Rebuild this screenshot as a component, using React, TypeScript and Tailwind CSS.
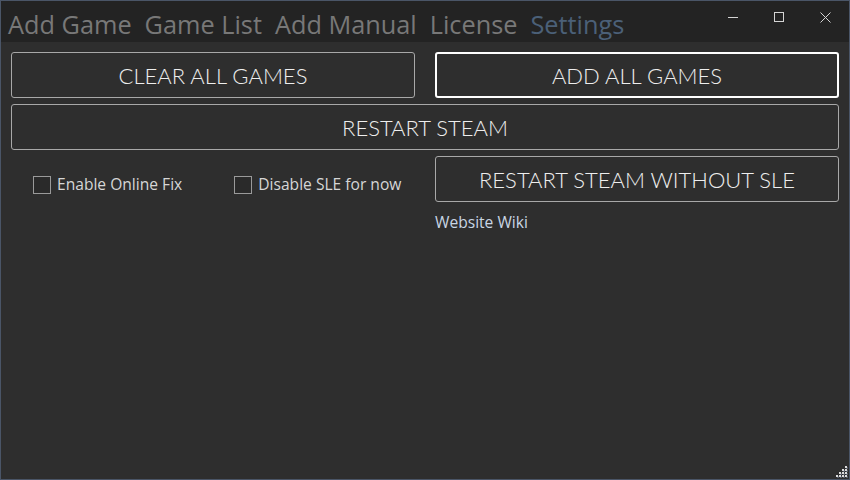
import React from "react";

const tabs = ["Add Game", "Game List", "Add Manual", "License", "Settings"];

function WinButtons() {
  return (
    <div className="flex items-center h-full">
      <div className="w-[46px] h-full flex items-center justify-center">
        <svg width="10" height="10" viewBox="0 0 10 10">
          <line x1="0" y1="5.5" x2="10" y2="5.5" stroke="#d4d4d4" strokeWidth="1" />
        </svg>
      </div>
      <div className="w-[46px] h-full flex items-center justify-center">
        <svg width="10" height="10" viewBox="0 0 10 10">
          <rect x="0.5" y="0.5" width="9" height="9" fill="none" stroke="#d4d4d4" strokeWidth="1" />
        </svg>
      </div>
      <div className="w-[46px] h-full flex items-center justify-center">
        <svg width="11" height="11" viewBox="0 0 11 11">
          <path d="M0.5 0.5 L10.5 10.5 M10.5 0.5 L0.5 10.5" stroke="#d4d4d4" strokeWidth="1" />
        </svg>
      </div>
    </div>
  );
}

function Check({ label }: { label: string }) {
  return (
    <label className="flex items-center gap-[6px] text-[15.6px] text-[#d6d6d6]">
      <span className="w-[18px] h-[18px] border border-[#9a9a9a] bg-[#2a2a2a]" />
      <span>{label}</span>
    </label>
  );
}

function Grip() {
  const dots: [number, number][] = [];
  for (let r = 0; r < 4; r++) {
    for (let c = 3 - r; c < 4; c++) dots.push([c * 3, r * 3]);
  }
  return (
    <svg className="absolute right-[1px] bottom-[1px]" width="12" height="12" viewBox="0 0 12 12">
      {dots.map(([x, y], i) => (
        <g key={i}>
          <rect x={x + 1} y={y + 1} width="2" height="2" fill="#555a66" />
          <rect x={x} y={y} width="2" height="2" fill="#dcdcdc" />
        </g>
      ))}
    </svg>
  );
}

export default function App() {
  const btn =
    "h-[46px] rounded-[3px] border border-[#a8a8a8] bg-[#2e2e2e] text-[22px] font-light text-[#eeeeee] flex items-center justify-center";
  const btnFont = { fontFamily: "Lato, 'Open Sans', sans-serif" };
  return (
    <div
      className="relative w-[850px] h-[480px] border border-[#4a5567] bg-[#2e2e2e] flex flex-col overflow-hidden"
      style={{ fontFamily: "'Open Sans', 'Noto Sans', sans-serif" }}
    >
      <div className="h-[41px] bg-[#232323] flex items-start justify-between">
        <div className="flex items-center gap-[13px] pl-[7px] pt-[4px] text-[25.3px] leading-[38px] text-[#787878]">
          {tabs.map((t) => (
            <span key={t} className={t === "Settings" ? "text-[#4b6078]" : ""}>
              {t}
            </span>
          ))}
        </div>
        <div className="h-[32px] pr-[1px]">
          <WinButtons />
        </div>
      </div>
      <div className="flex-1 px-[10px] pt-[10px]">
        <div className="grid grid-cols-2 gap-x-[20px] gap-y-[6px]">
          <button className={btn} style={btnFont}>CLEAR ALL GAMES</button>
          <button className={btn + " !border-2 !border-white"} style={btnFont}>ADD ALL GAMES</button>
          <button className={btn + " col-span-2"} style={btnFont}>RESTART STEAM</button>
          <div className="flex items-start pl-[22px] pt-[17px] gap-[52px]">
            <Check label="Enable Online Fix" />
            <Check label="Disable SLE for now" />
          </div>
          <div className="flex flex-col">
            <button className={btn} style={btnFont}>RESTART STEAM WITHOUT SLE</button>
            <a className="mt-[9px] text-[15.6px] text-[#c9d6e4]">Website Wiki</a>
          </div>
        </div>
      </div>
      <Grip />
    </div>
  );
}
